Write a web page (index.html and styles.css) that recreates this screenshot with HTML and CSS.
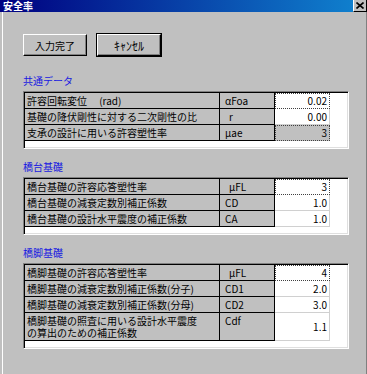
FILE: index.html
```html
<!DOCTYPE html>
<html lang="ja">

<head>
    <meta charset="UTF-8">
    <title>安全率</title>
    <link rel="stylesheet" href="styles.css">
</head>

<body>

    <div class="window">
        <div class="titlebar">
            <span class="title">安全率</span>
            <span class="close-btn">
                <svg width="8" height="7" viewBox="0 0 8 7">
                    <path d="M0.5 0.5 L7.5 6.5 M7.5 0.5 L0.5 6.5" stroke="#000" stroke-width="1.6" fill="none"/>
                </svg>
            </span>
        </div>

        <div class="client">
            <div class="buttons">
                <button class="btn">入力完了</button>
                <button class="btn btn-default"><span class="hankaku">ｷｬﾝｾﾙ</span></button>
            </div>

            <!-- 共通データ -->
            <div class="group first">
                <div class="group-title">共通データ</div>
                <div class="grid">
                    <div class="row">
                        <div class="label">許容回転変位　 (rad)</div>
                        <div class="sym">αFoa</div>
                        <div class="val focus">0.02</div>
                    </div>
                    <div class="row">
                        <div class="label">基礎の降伏剛性に対する二次剛性の比</div>
                        <div class="sym indent">r</div>
                        <div class="val">0.00</div>
                    </div>
                    <div class="row">
                        <div class="label">支承の設計に用いる許容塑性率</div>
                        <div class="sym">μae</div>
                        <div class="val disabled focus">3</div>
                    </div>
                </div>
            </div>

            <!-- 橋台基礎 -->
            <div class="group">
                <div class="group-title">橋台基礎</div>
                <div class="grid">
                    <div class="row">
                        <div class="label">橋台基礎の許容応答塑性率</div>
                        <div class="sym indent">μFL</div>
                        <div class="val focus">3</div>
                    </div>
                    <div class="row">
                        <div class="label">橋台基礎の減衰定数別補正係数</div>
                        <div class="sym">CD</div>
                        <div class="val">1.0</div>
                    </div>
                    <div class="row">
                        <div class="label">橋台基礎の設計水平震度の補正係数</div>
                        <div class="sym">CA</div>
                        <div class="val">1.0</div>
                    </div>
                </div>
            </div>

            <!-- 橋脚基礎 -->
            <div class="group">
                <div class="group-title">橋脚基礎</div>
                <div class="grid">
                    <div class="row">
                        <div class="label">橋脚基礎の許容応答塑性率</div>
                        <div class="sym indent">μFL</div>
                        <div class="val focus">4</div>
                    </div>
                    <div class="row">
                        <div class="label">橋脚基礎の減衰定数別補正係数(分子)</div>
                        <div class="sym">CD1</div>
                        <div class="val">2.0</div>
                    </div>
                    <div class="row">
                        <div class="label">橋脚基礎の減衰定数別補正係数(分母)</div>
                        <div class="sym">CD2</div>
                        <div class="val">3.0</div>
                    </div>
                    <div class="row tall">
                        <div class="label">橋脚基礎の照査に用いる設計水平震度<br>の算出のための補正係数</div>
                        <div class="sym">Cdf</div>
                        <div class="val">1.1</div>
                    </div>
                </div>
            </div>
        </div>
    </div>

</body>

</html>
```

FILE: styles.css
```css
body {
    margin: 0;
    background-color: #C0C0C0;
    font-family: "Noto Sans CJK JP", sans-serif;
    font-size: 10px;
    color: #000;
}

.window {
    width: 367px;
    height: 374px;
    overflow: hidden;
}

.titlebar {
    height: 12px;
    display: flex;
    justify-content: space-between;
    align-items: flex-start;
    background: linear-gradient(to right, #000080, #1084D0);
    overflow: hidden;
}

.title {
    color: #fff;
    font-size: 10px;
    line-height: 12px;
    font-weight: bold;
    padding-left: 3px;
}

.close-btn {
    width: 12px;
    height: 11px;
    background-color: #C0C0C0;
    border-left: 1px solid #fff;
    border-right: 1px solid #000;
    border-bottom: 1px solid #000;
    display: flex;
    align-items: center;
    justify-content: center;
}

.client {
    height: 362px;
    margin-left: 2px;
    border-left: 1px solid #fff;
    border-right: 1px solid #808080;
    padding-left: 20px;
}

.buttons {
    display: flex;
    gap: 10px;
    padding-top: 22px;
}

.btn {
    width: 64px;
    height: 22px;
    padding: 0;
    font-family: "Noto Sans CJK JP", sans-serif;
    font-size: 10px;
    color: #000;
    background-color: #C0C0C0;
    border: 1px solid;
    border-color: #fff #000 #000 #fff;
    box-shadow: inset -1px -1px #808080;
}

.btn-default {
    outline: 1px solid #000;
}

.hankaku {
    font-size: 12px;
}

.group {
    margin-top: 12px;
}

.group.first {
    margin-top: 19px;
}

.group-title {
    height: 12px;
    line-height: 12px;
    color: #1818E0;
    margin-bottom: 4px;
}

.grid {
    width: 326px;
    box-sizing: border-box;
    background-color: #fff;
    border: 1px solid;
    border-color: #808080 #fff #fff #808080;
    box-shadow: inset 1px 1px #000, inset -1px -1px #DFDFDF;
    padding: 1px 1px 7px 1px;
}

.row {
    display: flex;
    height: 16px;
}

.label,
.sym,
.val {
    box-sizing: border-box;
    line-height: 15px;
    white-space: pre;
}

.label {
    width: 195px;
    padding-left: 2px;
    background-color: #C0C0C0;
    border-right: 1px solid #000;
    border-bottom: 1px solid #000;
}

.sym {
    width: 55px;
    padding-left: 5px;
    background-color: #C0C0C0;
    border-right: 1px solid #000;
    border-bottom: 1px solid #000;
}

.sym.indent {
    padding-left: 9px;
}

.val {
    width: 55px;
    padding-right: 2px;
    text-align: right;
    background-color: #fff;
    border-right: 1px solid #D0D0D0;
    border-bottom: 1px solid #D0D0D0;
}

.val.disabled {
    background-color: #C0C0C0;
}

.val.focus {
    border: 1px dotted #404040;
    line-height: 14px;
}

.row.tall {
    height: 28px;
}

.row.tall .label,
.row.tall .sym {
    line-height: 12px;
    padding-top: 2px;
}

.row.tall .val {
    line-height: 27px;
}
```
